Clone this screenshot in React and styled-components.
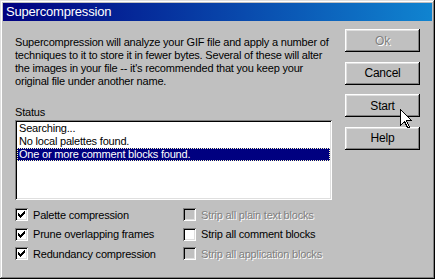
import React from "react";
import styled, { createGlobalStyle } from "styled-components";

const GlobalStyle = createGlobalStyle`
  html, body {
    margin: 0;
    padding: 0;
    background: #c0c0c0;
  }
  body {
    font-family: "Liberation Sans", Arial, sans-serif;
    font-size: 11px;
  }
`;

const Window = styled.div`
  position: relative;
  width: 435px;
  height: 279px;
  box-sizing: border-box;
  background: #c0c0c0;
  padding: 3px;
  display: flex;
  flex-direction: column;
  box-shadow: inset -1px -1px 0 #000, inset 1px 1px 0 #dfdfdf,
    inset -2px -2px 0 #808080, inset 2px 2px 0 #fff;
`;

const TitleBar = styled.div`
  height: 18px;
  flex: 0 0 18px;
  display: flex;
  align-items: center;
  padding-left: 3px;
  background: linear-gradient(90deg, #000080 0%, #1084d0 100%);
  color: #fff;
  font-size: 13px;
  letter-spacing: -0.2px;
  line-height: 18px;
`;

const Body = styled.div`
  flex: 1;
  display: grid;
  grid-template-columns: 317px 75px;
  column-gap: 13px;
  padding: 0 12px;
  align-items: start;
`;

const Main = styled.div`
  display: flex;
  flex-direction: column;
  padding-top: 15px;
`;

const Description = styled.p`
  margin: 0;
  line-height: 13px;
  letter-spacing: -0.2px;
  white-space: nowrap;
  color: #000;
`;

const Label = styled.div`
  margin-top: 17.5px;
  line-height: 13px;
  letter-spacing: -0.2px;
`;

const ListBox = styled.div`
  margin-top: 1.5px;
  height: 80px;
  box-sizing: border-box;
  padding: 2px;
  background: #fff;
  box-shadow: inset 1px 1px 0 #808080, inset -1px -1px 0 #fff,
    inset 2px 2px 0 #000, inset -2px -2px 0 #dfdfdf;
`;

const ListItem = styled.div`
  height: 13px;
  line-height: 13px;
  box-sizing: border-box;
  padding-left: 2px;
  letter-spacing: -0.2px;
  white-space: nowrap;
  color: ${({ selected }) => (selected ? "#fff" : "#000")};
  background: ${({ selected }) => (selected ? "#000080" : "transparent")};
  outline: ${({ selected }) => (selected ? "1px dotted #ffffc0" : "none")};
  outline-offset: -1px;
`;

const Options = styled.div`
  margin-top: 5px;
  display: grid;
  grid-template-columns: 168px 1fr;
  grid-auto-rows: 19.6px;
  grid-auto-flow: column;
  grid-template-rows: repeat(3, 19.6px);
`;

const CheckRow = styled.label`
  display: flex;
  align-items: center;
  gap: 5px;
  white-space: nowrap;
  letter-spacing: -0.2px;
  color: ${({ disabled }) => (disabled ? "#808080" : "#000")};
  text-shadow: ${({ disabled }) => (disabled ? "1px 1px 0 #fff" : "none")};
`;

const Box = styled.span`
  width: 13px;
  height: 13px;
  flex: 0 0 13px;
  box-sizing: border-box;
  display: flex;
  align-items: center;
  justify-content: center;
  background: ${({ disabled }) => (disabled ? "#c0c0c0" : "#fff")};
  box-shadow: inset 1px 1px 0 #808080, inset -1px -1px 0 #fff,
    inset 2px 2px 0 #000, inset -2px -2px 0 #dfdfdf;
`;

const Buttons = styled.div`
  display: flex;
  flex-direction: column;
  gap: 9.5px;
  padding-top: 8px;
`;

const Button = styled.button`
  width: 75px;
  height: 23px;
  padding: 0;
  border: 0;
  background: #c0c0c0;
  font-family: inherit;
  font-size: 12px;
  letter-spacing: -0.2px;
  color: ${({ disabled }) => (disabled ? "#808080" : "#000")};
  text-shadow: ${({ disabled }) => (disabled ? "1px 1px 0 #fff" : "none")};
  box-shadow: inset -1px -1px 0 #000, inset 1px 1px 0 #fff,
    inset -2px -2px 0 #808080, inset 2px 2px 0 #dfdfdf;
`;

const Cursor = styled.svg`
  position: absolute;
  left: 400px;
  top: 109px;
`;

function Check() {
  return (
    <svg width="7" height="7" viewBox="0 0 7 7" shapeRendering="crispEdges">
      <path
        d="M0 2h1v1h1v1h1V3h1V2h1V1h1V0h1v3H6v1H5v1H4v1H3v1H2V6H1V5H0z"
        fill="#000"
      />
    </svg>
  );
}

function Option({ label, checked, disabled }) {
  return (
    <CheckRow disabled={disabled}>
      <Box disabled={disabled}>{checked ? <Check /> : null}</Box>
      {label}
    </CheckRow>
  );
}

const options = [
  { label: "Palette compression", checked: true },
  { label: "Prune overlapping frames", checked: true },
  { label: "Redundancy compression", checked: true },
  { label: "Strip all plain text blocks", disabled: true },
  { label: "Strip all comment blocks" },
  { label: "Strip all application blocks", disabled: true },
];

const statusLines = [
  "Searching...",
  "No local palettes found.",
  "One or more comment blocks found.",
];

export default function App() {
  return (
    <>
      <GlobalStyle />
      <Window>
        <TitleBar>Supercompression</TitleBar>
        <Body>
          <Main>
            <Description>
              Supercompression will analyze your GIF file and apply a number of
              <br />
              techniques to it to store it in fewer bytes. Several of these will
              alter
              <br />
              the images in your file -- it's recommended that you keep your
              <br />
              original file under another name.
            </Description>
            <Label>Status</Label>
            <ListBox>
              {statusLines.map((line, i) => (
                <ListItem key={line} selected={i === statusLines.length - 1}>
                  {line}
                </ListItem>
              ))}
            </ListBox>
            <Options>
              {options.map((o) => (
                <Option key={o.label} {...o} />
              ))}
            </Options>
          </Main>
          <Buttons>
            <Button disabled>Ok</Button>
            <Button>Cancel</Button>
            <Button>Start</Button>
            <Button>Help</Button>
          </Buttons>
        </Body>
        <Cursor width="12" height="19" viewBox="0 0 12 19" shapeRendering="crispEdges">
          <path
            d="M0.5 0.5V16.5L4.5 12.5L7.5 18.5H9.5L6.5 11.5H11.5Z"
            fill="#fff"
            stroke="#000"
            strokeWidth="1"
          />
        </Cursor>
      </Window>
    </>
  );
}
